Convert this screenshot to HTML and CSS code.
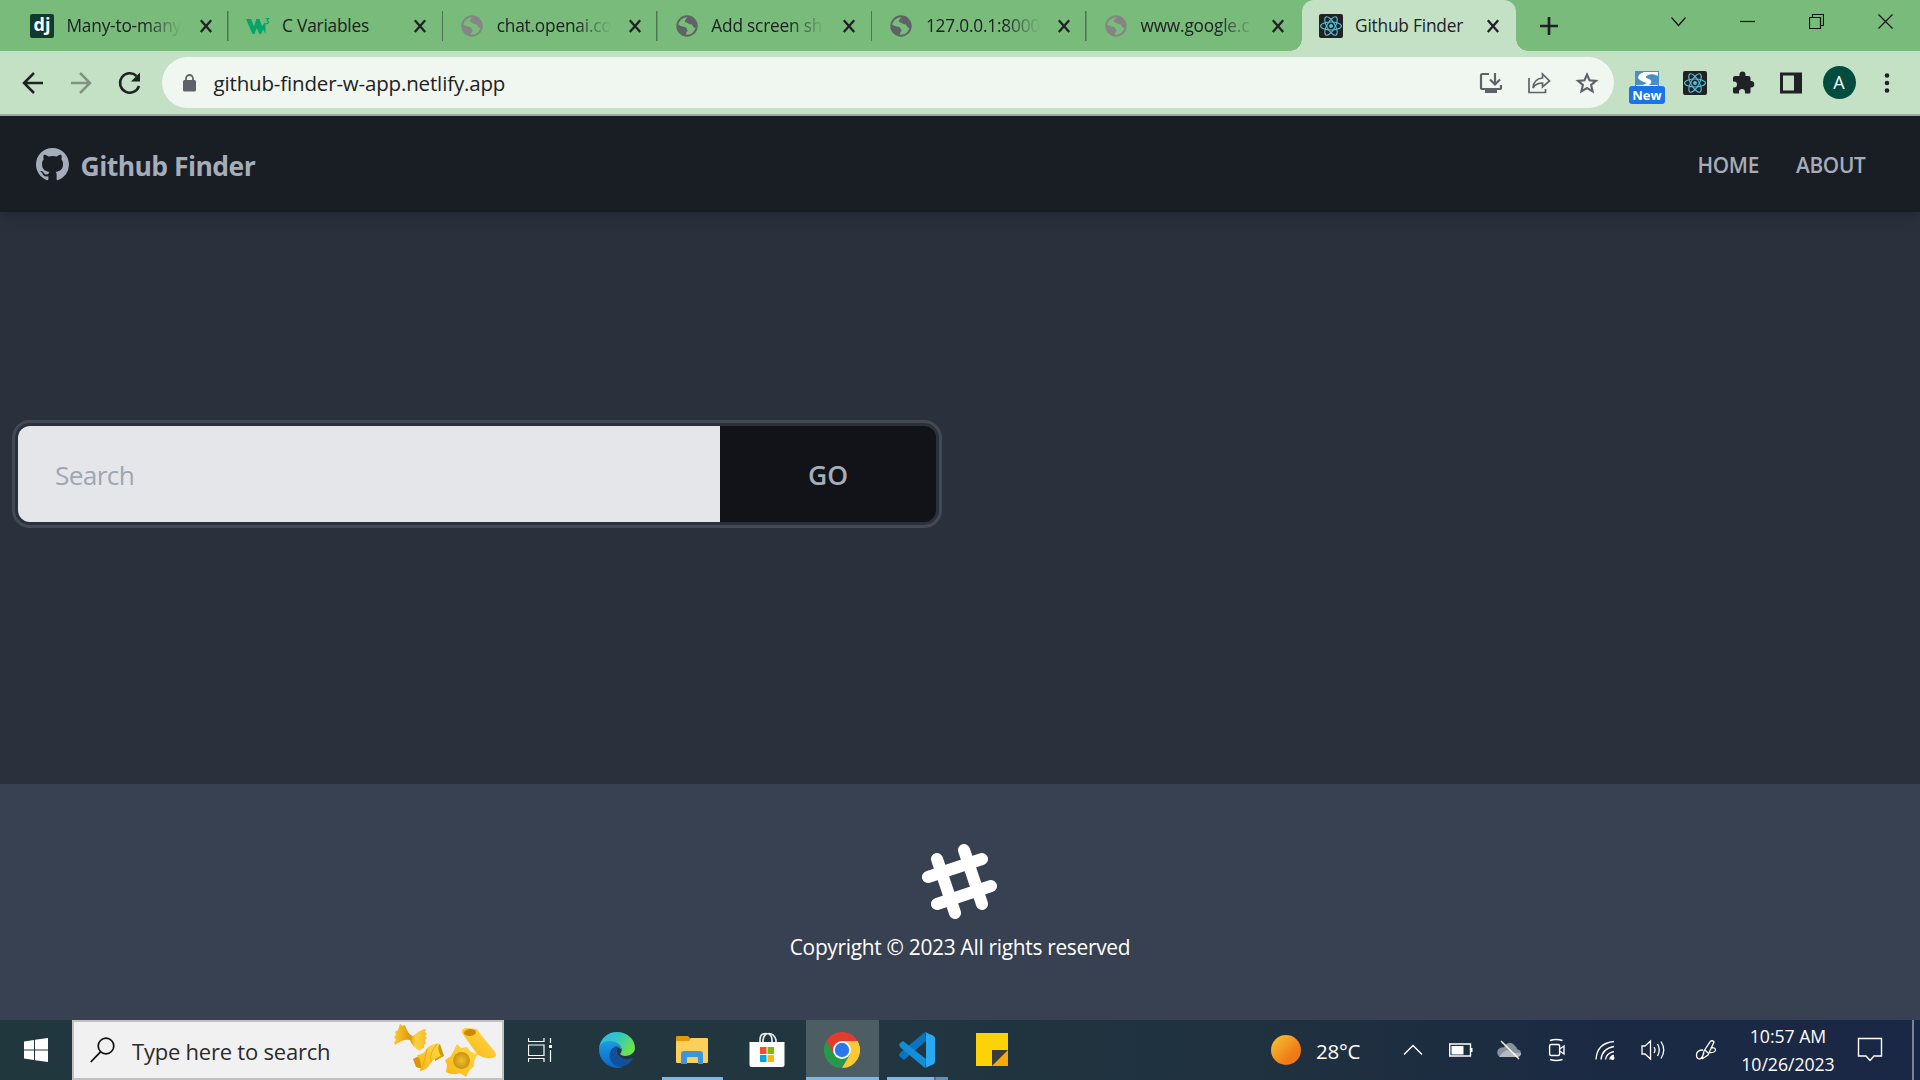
FILE: index.html
```html
<!DOCTYPE html>
<html lang="en">
<head>
<meta charset="utf-8">
<title>Github Finder</title>
<link rel="stylesheet" href="styles.css">
</head>
<body>
<svg class="defs" aria-hidden="true">
  <symbol id="x" viewBox="0 0 24 24"><path d="M6.8 6.3 17.2 18M17.2 6.3 6.8 18" fill="none" stroke="#202124" stroke-width="2.3"/></symbol>
  <symbol id="globe" viewBox="0 0 24 24"><circle cx="12" cy="12" r="9.7" fill="none" stroke="currentColor" stroke-width="2"/><path d="M2 10.5 7.5 12.5Q11.5 12.5 12 15.5Q13.5 16.5 11.5 18L10.5 22C5 21 1.5 16.5 2 10.5ZM13.5 2C12 4.5 9.5 5.5 10 8C12.5 8.5 14 10.5 17 10.5C17.5 12.5 19 14.5 22 14C23 8 19.5 3 13.5 2Z" fill="currentColor"/></symbol>
  <symbol id="react" viewBox="0 0 24 24"><rect width="24" height="24" rx="2" fill="#222"/><g fill="none" stroke="#53c1de" stroke-width="1.1"><ellipse cx="12" cy="12" rx="10.4" ry="4"/><ellipse cx="12" cy="12" rx="10.4" ry="4" transform="rotate(60 12 12)"/><ellipse cx="12" cy="12" rx="10.4" ry="4" transform="rotate(120 12 12)"/></g><circle cx="12" cy="12" r="2" fill="#53c1de"/></symbol>
</svg>

<div class="tabs">
  <div class="tab"><span class="dj">dj</span><span class="tt">Many-to-many</span><svg class="i24"><use href="#x"/></svg></div>
  <div class="tab"><svg class="i24 w3" viewBox="0 0 24 24"><path d="M0 5H5L8 12.500 10.300 5H13.500L16 12.500 18.500 8.500 19.500 10V20L17.300 15.500 15 20H13.300L10.700 14 8.500 20H6.500Z" fill="#04a56c"/><path d="M19.500 4.500h3l-1.500 2.300q2 .6 1.200 2.100q-.9 1.400-2.800.2" fill="none" stroke="#04a56c" stroke-width="1.100"/></svg><span class="tt">C Variables</span><svg class="i24"><use href="#x"/></svg></div>
  <div class="tab"><svg class="i24 g1"><use href="#globe"/></svg><span class="tt">chat.openai.co</span><svg class="i24"><use href="#x"/></svg></div>
  <div class="tab"><svg class="i24 g2"><use href="#globe"/></svg><span class="tt">Add screen sh</span><svg class="i24"><use href="#x"/></svg></div>
  <div class="tab"><svg class="i24 g2"><use href="#globe"/></svg><span class="tt">127.0.0.1:8000</span><svg class="i24"><use href="#x"/></svg></div>
  <div class="tab last"><svg class="i24 g1"><use href="#globe"/></svg><span class="tt">www.google.c</span><svg class="i24"><use href="#x"/></svg></div>
  <div class="tab active"><svg class="i24"><use href="#react"/></svg><span class="tt">Github Finder</span><svg class="i24"><use href="#x"/></svg></div>
  <svg class="plus" viewBox="0 0 18 18"><path d="M9 0V18M0 9H18" stroke="#202124" stroke-width="2.7"/></svg>
  <div class="win">
    <svg viewBox="0 0 15 15"><path d="M.5 3.500 7.500 11.500 14.500 3.500"/></svg>
    <svg viewBox="0 0 15 15"><path d="M0 7.500H15"/></svg>
    <svg viewBox="0 0 15 15"><path d="M.5 3.500H11.500V14.500H.5ZM3.500 3V.5H14.500V11.500H12"/></svg>
    <svg viewBox="0 0 15 15"><path d="M.5.5 14.500 14.500M14.500.5.5 14.500"/></svg>
  </div>
</div>

<div class="toolbar">
  <svg class="cell" viewBox="0 0 48 48"><path d="M34 24H16M25 14 15 24 25 34" fill="none" stroke="#202124" stroke-width="2.500"/></svg>
  <svg class="cell" viewBox="0 0 48 48"><path d="M14 24H32M23 14 33 24 23 34" fill="none" stroke="#7f9381" stroke-width="2.500"/></svg>
  <svg class="cell" viewBox="0 0 48 48"><path d="M31.500 17A9.700 9.700 0 1 0 34 27" fill="none" stroke="#202124" stroke-width="2.500"/><path d="M35 13.500V22.500H26Z" fill="#202124"/></svg>
  <div class="omni">
    <svg class="lock" viewBox="0 0 13 18"><rect y="6" width="13" height="11.500" rx="1.500" fill="#5f6368"/><path d="M3 7V4.500a3.500 3.500 0 0 1 7 0V7" fill="none" stroke="#5f6368" stroke-width="1.800"/></svg>
    <span class="url">github-finder-w-app.netlify.app</span>
    <svg class="cell" viewBox="0 0 48 48"><path d="M22 15H15.500Q14 15 14 16.500V28.500Q14 30 15.500 30H32.500Q34 30 34 28.500V26M28 14V25M23 20.500 28 25.500 33 20.500" fill="none" stroke="#5f6368" stroke-width="2.200"/><path d="M18 30.500H30V34H18Z" fill="#5f6368"/></svg>
    <svg class="cell" viewBox="0 0 48 48"><path d="M14 19V33.500H30.500V30M18 29C18.500 22 22 19.500 27.500 19V15L34.500 22 27.500 28V24Q21 24 18 29Z" fill="none" stroke="#5f6368" stroke-width="1.700"/></svg>
    <svg class="cell" viewBox="0 0 48 48"><path d="M24 15.500 26.500 21.200 33 21.900 28.100 26 29.600 32.300 24 29 18.400 32.300 19.900 26 15 21.900 21.500 21.200Z" fill="none" stroke="#5f6368" stroke-width="2.100"/></svg>
  </div>
  <div class="cell ext">
    <svg viewBox="0 0 24 24"><rect width="24" height="24" fill="#4a8fc4"/><path d="M9 1H23V5C18 2 12 3 11 6C11 9 22 7 23 15V20H1V14Q8 15 12 12Q5 10 3 7Q3 3 9 1Z" fill="#fff"/><path d="M11 6C12 4 20 4 23 14H14Q20 10 11 6Z" fill="#4a8fc4"/></svg><b>New</b>
  </div>
  <svg class="cell r" viewBox="0 0 48 48"><use href="#react" x="12" y="12" width="24" height="24"/></svg>
  <svg class="cell" viewBox="0 0 48 48"><path d="M16 17H20.500V15.500a3 3 0 0 1 6 0V17H29.500Q31.500 17 31.500 19V22H32a3 3 0 0 1 0 6.500H31.500V33Q31.500 34.500 30 34.500H26V33a3 3 0 0 0-6 0V34.500H16Q14 34.500 14 33V28.500H15a3 3 0 0 0 0-6H14V19Q14 17 16 17Z" fill="#202124"/></svg>
  <svg class="cell" viewBox="0 0 48 48"><path d="M13 13.500H35V34.500H13ZM16 16.500V31.500H27V16.500Z" fill="#202124" fill-rule="evenodd"/></svg>
  <div class="cell"><span class="avatar">A</span></div>
  <svg class="cell" viewBox="0 0 48 48"><g fill="#202124"><circle cx="24" cy="16.500" r="2.300"/><circle cx="24" cy="24" r="2.300"/><circle cx="24" cy="31.500" r="2.300"/></g></svg>
</div>

<nav class="nav">
  <svg class="gh" viewBox="0 0 16 16"><path fill="#a6adba" d="M8 0C3.580 0 0 3.580 0 8c0 3.540 2.290 6.530 5.470 7.590.4.070.55-.17.55-.38 0-.19-.010-.82-.010-1.490-2.010.37-2.530-.49-2.690-.94-.09-.23-.48-.94-.82-1.130-.28-.15-.68-.52-.010-.53.63-.010 1.080.58 1.230.82.72 1.210 1.870.87 2.330.66.070-.52.28-.87.51-1.070-1.780-.2-3.640-.89-3.640-3.950 0-.87.31-1.590.82-2.150-.08-.2-.36-1.020.08-2.120 0 0 .67-.21 2.200.82.64-.18 1.320-.27 2-.27s1.360.09 2 .27c1.530-1.040 2.200-.82 2.200-.82.44 1.100.16 1.920.08 2.120.51.56.82 1.270.82 2.150 0 3.070-1.870 3.750-3.650 3.950.29.25.54.73.54 1.480 0 1.070-.010 1.930-.010 2.200 0 .21.15.46.55.38A8.010 8.010 0 0 0 16 8c0-4.420-3.580-8-8-8z"/></svg>
  <span class="brand">Github Finder</span>
  <a class="home">HOME</a><a class="about">ABOUT</a>
</nav>

<main class="main">
  <form class="search"><span class="field">Search</span><span class="go">GO</span></form>
</main>

<footer class="footer">
  <svg class="hash" width="75" height="75" viewBox="0 0 75 75"><path d="M15 15 33 69M42 6 60 60M6 33 60 15M15 60 69 42" fill="none" stroke="#fff" stroke-width="12" stroke-linecap="round"/></svg>
  <p>Copyright © 2023 All rights reserved</p>
</footer>

<div class="taskbar">
  <div class="start"><svg width="24" height="24" viewBox="0 0 24 24"><path d="M0 3.500 10 2V11.500H0ZM11 1.800 24 0V11.500H11ZM0 12.500H10V22L0 20.500ZM11 12.500H24V24L11 22.200Z" fill="#fff"/></svg></div>
  <div class="find">
    <svg width="25" height="26" viewBox="0 0 25 26"><circle cx="16" cy="9" r="7.800" fill="none" stroke="#111" stroke-width="1.700"/><path d="M10.500 14.800.8 25" stroke="#111" stroke-width="1.800"/></svg>
    <span>Type here to search</span>
    <svg class="pasta" width="108" height="56" viewBox="0 0 108 56">
      <defs>
        <linearGradient id="p1"><stop offset="0" stop-color="#fdc931"/><stop offset=".5" stop-color="#dc9a08"/><stop offset=".65" stop-color="#ffd347"/><stop offset="1" stop-color="#f5bb20"/></linearGradient>
        <linearGradient id="p2" x1="0" y1="1" x2="1" y2="0"><stop offset="0" stop-color="#f9b513"/><stop offset="1" stop-color="#ffdb4a"/></linearGradient>
        <radialGradient id="p3"><stop offset="0" stop-color="#f0bf2d"/><stop offset="1" stop-color="#c9930f"/></radialGradient>
      </defs>
      <path d="M7 1 9.500 3 12 2Q15 12 20 13Q26 7 33 6L32 9 34 11 32 13 34 15 32 17 33 20 31 22 31 25 28 26 27 28Q19 24 17 17Q10 16 2 22L1 19 3 17 1 14 3 12 2 9 5 7Z" fill="url(#p1)"/>
      <path d="M20 36 28 32 30 46 23 44Z" fill="#d89706"/><path d="M41 25 47 21 51 33 42 38Z" fill="#d89706"/>
      <path d="M24 32Q31 32 34 25Q38 21 46 20Q44 28 48 33Q40 36 38 40Q34 47 27 48Q30 40 24 32Z" fill="url(#p2)"/><path d="M34 26Q32 38 28 47M44 21Q36 30 38 39" fill="none" stroke="#eaaa17"/>
      <path d="M64 21 68 25 74 24 78 29 85 31Q80 38 81 43L76 48 73 54 67 50Q60 53 53 49L54 42 52 37 58 33Z" fill="url(#p2)"/><circle cx="68.500" cy="37.500" r="8.500" fill="url(#p3)"/>
      <path d="M69 10Q68 5 74 5L84 6Q88 12 98 24 104 30 103 33C98 38 88 34 84 31Z" fill="url(#p2)"/><ellipse cx="77" cy="9.500" rx="6" ry="3.500" fill="#c98a05" transform="rotate(-5 77 9.500)"/>
    </svg>
  </div>
  <div class="app tv"><svg width="24" height="24" viewBox="0 0 24 24"><path d="M.5 0V3.500H16V0M.5 24V20.500H16V24M.5 7H16V17.500H.5ZM22.500 0V5M22.500 12V24" fill="none" stroke="#fff" stroke-width="1.200"/><path d="M21 7h3v3h-3z" fill="#fff"/></svg></div>
  <div class="app"><svg width="36" height="36" viewBox="0 0 36 36">
    <defs><linearGradient id="e1" x2="1" y2=".5"><stop offset="0" stop-color="#2fb5ee"/><stop offset=".5" stop-color="#32c5c4"/><stop offset="1" stop-color="#6be34b"/></linearGradient><linearGradient id="e2" x2="0" y2="1"><stop offset="0" stop-color="#1b9de2"/><stop offset="1" stop-color="#0a66c8"/></linearGradient></defs>
    <path d="M0 17C1 6 9 0 18 0C28 0 36 7 36 16C36 24 24 26 21 22C24 19 23 15 19 12C12 8 3 10 0 17Z" fill="url(#e1)"/><path d="M0 18C0 12 5 9 11 9C18 9 23 14 22 17C15 12 10 18 12 24C14 31 20 35 24 35C12 39 0 29 0 18Z" fill="url(#e2)"/><path d="M17 14C11 17 9 23 12 29C15 35 25 39 34 27C34 26 33 26 32 26.500C25 29 18 24 18 19Q18 16 20 15Z" fill="#124f9c"/></svg></div>
  <div class="app run"><svg width="32" height="28" viewBox="0 0 32 28"><path d="M0 1Q0 0 1 0H12L15 3V6H0Z" fill="#e09a08"/><path d="M0 5H13L15 2H31Q32 2 32 3V26Q32 27 31 27H1Q0 27 0 26Z" fill="#fccf5a"/><path d="M5 27V18Q5 15 8 15H24Q27 15 27 18V28H22V22Q22 21 21 21H12Q11 21 11 22V28H5Z" fill="#3a95de"/></svg></div>
  <div class="app"><svg width="36" height="36" viewBox="0 0 36 36"><path d="M11 11V8Q11 1.500 17 1.500T23 8V11M14 11V8Q15 1.500 20 1.500T27 8V11" fill="none" stroke="#e8e8e8" stroke-width="1.700"/><path d="M.5 10H35.500V33Q35.500 35 33.500 35H2.500Q.5 35 .5 33Z" fill="#fff"/><path d="M11 15h6.500v7H11z" fill="#f25022"/><path d="M18.500 15H25v7h-6.500z" fill="#7fba00"/><path d="M11 23h6.500v7H11z" fill="#00a4ef"/><path d="M18.500 23H25v7h-6.500z" fill="#ffb900"/></svg></div>
  <div class="app run on"><svg width="36" height="36" viewBox="0 0 36 36"><path d="M18 9H33.600A18 18 0 0 0 2.400 9L10.200 22.500Z" fill="#e33b2e"/><path d="M10.200 22.500 2.400 9A18 18 0 0 0 18 36L25.800 22.500Z" fill="#27994a"/><path d="M25.800 22.500 18 36A18 18 0 0 0 33.600 9H18Z" fill="#fcc934"/><circle cx="18" cy="18" r="9" fill="#fff"/><circle cx="18" cy="18" r="7.200" fill="#2b78ee"/></svg></div>
  <div class="app run multi"><svg width="36" height="36" viewBox="0 0 36 36"><path d="M26 0 27 9 5 28 0 24Q0 22 2 20Z" fill="#0a74c0"/><path d="M4 9 0 12Q0 14 2 16L26 36 27 27Z" fill="#128dd6"/><path d="M26 0 34 3.500Q36 4.500 36 6V30Q36 31.500 34 32.500L26 36Q27 35.500 27 33V3Q27 .5 26 0Z" fill="#2aa9f2"/></svg></div>
  <div class="app sticky"><svg width="32" height="33" viewBox="0 0 32 33"><path d="M0 0H32V33H0Z" fill="#fcd307"/><path d="M32 17V33H16Z" fill="#f3aa0b"/><path d="M16 17H32L16 33Z" fill="#3d3d3d"/></svg></div>

  <div class="weather"><i></i><span>28°C</span></div>
  <div class="tray">
    <svg viewBox="0 0 24 24"><path d="M3 16.500 12 7.500 21 16.500"/></svg>
    <svg viewBox="0 0 24 24"><path d="M.7 6H21.500V18H.7Z"/><path d="M22 10h1.500v4H22z" fill="#fff" stroke="none"/><path d="M2.500 8h12v8.500h-12z" fill="#fff" stroke="none"/></svg>
    <svg viewBox="0 0 24 24"><path d="M3 19A5 5 0 0 1 3 10Q5 9 7 9.500C8 5 14 2 18 8Q20 9 20 11Q24 12 24 15T20 19Z" fill="#87929d" stroke="none"/><path d="M2 19Q8 10 13 13T24 15Q24 19 20 19Z" fill="#b3bac1" stroke="none"/><path d="M4 3 22 21"/></svg>
    <svg viewBox="0 0 24 24"><rect x="4.600" y="6.500" width="10" height="11" rx="1.500"/><path d="M14.600 11 19 8V16L14.600 13M5 2.500Q11 .5 17.500 2.500M5 21.500Q11 23.500 17.500 21.500"/></svg>
    <svg viewBox="0 0 24 24"><path d="M3 21.500Q4 5 21 3.500M8 21.500Q9 10.500 21 8.500M12.500 21.500Q13.500 15 21 13.500" stroke-width="1.300"/><path d="M17 21.500a4 4 0 0 1 4-4"/><circle cx="19.500" cy="20" r="1.300" fill="#fff"/></svg>
    <svg viewBox="0 0 24 24"><path d="M1 8H4L9.500 3V21L4 16H1ZM13 9Q15 12 13 15M16.500 6Q20 12 16.500 18M20 3.500Q25.500 12 20 20.500" stroke-width="1.300"/></svg>
    <svg class="pen" viewBox="0 0 24 24"><path d="M8 21 10 13 16 4Q18 1.500 20 4L14 17 8 21M11 12 14 15M9 12Q2.500 12 2.500 17Q2.500 21 6 21Q8 20 10 15M16.500 10Q21.500 9 21.500 12Q21 15 15 14.500" stroke-width="1.300"/></svg>
  </div>
  <div class="clock"><span>10:57 AM</span><span>10/26/2023</span></div>
  <svg class="note" width="26" height="26" viewBox="0 0 26 26"><path d="M1.500 1.500H24.500V19H17L13 23.500 9 19H1.500Z" fill="none" stroke="#fff" stroke-width="1.400"/></svg>
  <div class="peek"></div>
</div>
</body>
</html>
```
FILE: styles.css
```css
* { box-sizing: border-box; }
body {
  margin: 0; width: 1920px; height: 1080px; overflow: hidden;
  display: flex; flex-direction: column;
  font-family: "Open Sans", "Noto Sans", sans-serif;
  background: #2a303c; white-space: nowrap;
}
svg { display: block; flex: none; }
.defs { display: none; }
.i24 { width: 24px; height: 24px; }

/* browser tabs */
.tabs { height: 51px; flex: none; display: flex; align-items: center; padding-left: 14px; background: #79bb7b; }
.tab { width: 214.6px; height: 51px; flex: none; display: flex; align-items: center; padding-left: 17px;
  background: linear-gradient(#4c7550, #4c7550) right 0 top 11px / 1.500px 30px no-repeat; }
.tab:first-child { padding-left: 16px; }
.tab:first-child .tt { width: 116px; }
.tab.last { background: none; }
.tab.active { background: #c4e1c5; border-radius: 12px 12px 0 0; position: relative; }
.tab.active::before, .tab.active::after { content: ""; position: absolute; bottom: 0; width: 12px; height: 12px; }
.tab.active::before { left: -12px; background: radial-gradient(circle at 0 0, transparent 11.500px, #c4e1c5 12px); }
.tab.active::after { right: -12px; background: radial-gradient(circle at 100% 0, transparent 11.500px, #c4e1c5 12px); }
.tt { width: 115px; margin: 0 11px 0 12.500px; font-size: 17.300px; letter-spacing: -.2px; color: #202124;
  -webkit-mask: linear-gradient(90deg, #000 78px, transparent 114px); mask: linear-gradient(90deg, #000 78px, transparent 114px); }
.active .tt, .w3 + .tt { -webkit-mask: none; mask: none; }
.dj { width: 24px; height: 24px; border-radius: 2px; background: #103a2e; color: #fff; font-weight: 700; font-size: 18px; line-height: 21px; text-align: center; }
.g1 { color: #858585; }
.g2 { color: #5f6368; }
.plus { width: 18px; height: 18px; margin-left: 23.500px; }
.win { display: flex; gap: 54px; margin-left: auto; padding: 0 27px 8px 0; }
.win svg { width: 15px; height: 15px; fill: none; stroke: #111; stroke-width: 1.200; }

/* toolbar */
.toolbar { height: 65px; flex: none; display: flex; align-items: center; padding: 0 9px; background: #c4e1c5; border-bottom: 2px solid #9bad9d; }
.cell { width: 48px; height: 48px; flex: none; display: flex; align-items: center; justify-content: center; }
.omni { width: 1452px; height: 51px; margin: 0 9px; border-radius: 26px; background: #f0f7f0; display: flex; align-items: center; padding: 0 3px 0 20.500px; }
.lock { width: 13px; height: 18px; }
.url { flex: 1; margin-left: 18px; font-size: 20.500px; letter-spacing: -.16px; color: #202124; }
.ext { position: relative; }
.ext svg { width: 24px; height: 24px; }
.ext b { position: absolute; left: 6px; top: 27.500px; width: 36px; height: 18px; border-radius: 3px; background: #1a73e8; color: #fff; font-size: 13px; line-height: 18px; text-align: center; }
.avatar { width: 33px; height: 33px; border-radius: 50%; background: #004d40; color: #fff; font-size: 18px; line-height: 33px; text-align: center; }

/* page */
.nav { height: 96px; flex: none; display: flex; align-items: center; padding: 0 54.500px 0 36px; background: #191d24; color: #a6adba; position: relative;
  box-shadow: 0 10px 15px -3px rgba(0,0,0,.1), 0 4px 6px -2px rgba(0,0,0,.05); }
.gh { width: 33px; height: 33px; }
.brand { flex: 1; margin-left: 11.500px; padding-top: 3px; font-size: 26.500px; font-weight: 700; letter-spacing: -.55px; }
.nav a { font-size: 20.800px; font-weight: 600; letter-spacing: -.3px; padding-top: 2px; }
.about { margin-left: 37px; }
.main { height: 572px; flex: none; padding: 214px 0 0 18px; }
.search { display: flex; width: 918px; height: 96px; margin: 0; border-radius: 12px; outline: 3px solid #444954; outline-offset: 3px; overflow: hidden; align-items: stretch; line-height: 98px; }
.field { width: 702px; padding-left: 37px; background: #e5e6e9; color: #9fa6b2; font-size: 26.300px; letter-spacing: -.7px; }
.go { flex: 1; background: #111318; color: #a6adba; font-size: 26.500px; font-weight: 600; text-align: center; }
.footer { height: 236px; flex: none; display: flex; flex-direction: column; align-items: center; padding-top: 60px; background: #384152; }
.hash { margin-right: 1px; }
.footer p { margin: 13px 0 0; font-size: 20.900px; line-height: 30px; letter-spacing: -.3px; color: #fff; }

/* taskbar */
.taskbar { height: 60px; flex: none; display: flex; align-items: stretch; color: #fff; background: linear-gradient(90deg, #21373e 0, #213640 900px, #1f303f 1300px, #1b2a43 1600px, #1a2745 100%); }
.taskbar > div { display: flex; align-items: center; }
.start { width: 72px; justify-content: center; }
.find { width: 432px; background: #f1f1f1; border: 2px solid #c1c1c1; padding-left: 16px; color: #2b2b2b; font-size: 22px; letter-spacing: -.22px; }
.find span { flex: 1; margin: 1px 0 0 17px; }
.pasta { margin: 2px 1px 0 0; }
.app { width: 75px; justify-content: center; padding-bottom: 1px; position: relative; }
.tv { width: 72px; margin-right: 3.500px; }
.run::after { content: ""; position: absolute; bottom: 0; left: 7px; right: 7px; height: 3px; background: #76b9ed; }
.on { background: #4d5d64; width: 73px; margin-left: 1px; }
.on::after { left: 0; right: 0; }
.multi { margin-left: 1px; }
.multi::after { background: linear-gradient(90deg, #76b9ed 47px, #4c7396 47px, #4c7396 49px, #5f91ba 49px); }
.weather { margin-left: auto; gap: 15px; font-size: 20.500px; letter-spacing: -.3px; }
.weather i { width: 30px; height: 30px; border-radius: 50%; background: linear-gradient(135deg, #f3bd30 10%, #ef7a16 70%); }
.weather span { margin-top: 2px; }
.tray { gap: 24px; margin-left: 41px; }
.tray svg { width: 24px; height: 24px; fill: none; stroke: #fff; stroke-width: 1.400; }
.tray .pen { margin-left: 5px; }
.taskbar .clock { flex-direction: column; justify-content: center; width: 94px; margin-left: 23px; font-size: 17.700px; line-height: 28px; letter-spacing: -.05px; }
.note { margin: 17px 29px 0 22px; }
.peek { width: 8px; border-left: 2px solid #7b8496; }
```
